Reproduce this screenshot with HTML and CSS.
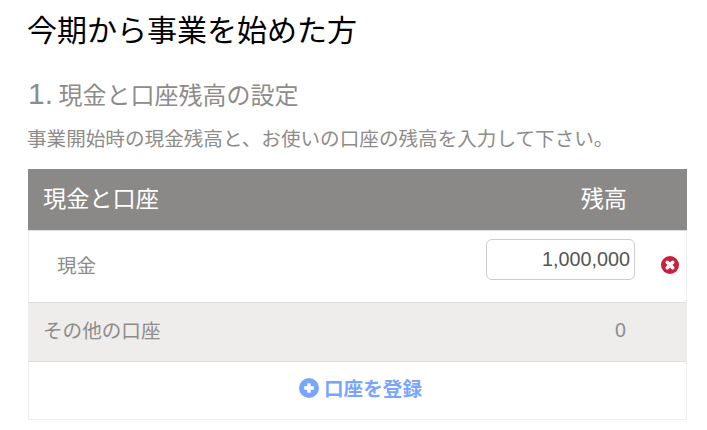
FILE: index.html
```html
<!DOCTYPE html>
<html lang="ja">
  <head>
    <meta charset="UTF-8" />
    <title>今期から事業を始めた方</title>
    <link rel="stylesheet" href="styles.css">
  </head>
  <body>
    <div class="container">
      <h1>今期から事業を始めた方</h1>
      <h2><span class="step">1.</span> 現金と口座残高の設定</h2>
      <p class="lead">事業開始時の現金残高と、お使いの口座の残高を入力して下さい。</p>
      <div class="accounts">
        <div class="row head">
          <div class="name">現金と口座</div>
          <div class="balance">残高</div>
        </div>
        <div class="row cash">
          <div class="name">現金</div>
          <input class="amount" type="text" value="1,000,000" />
          <svg class="remove" viewBox="0 0 18 18" width="18" height="18">
            <circle cx="9" cy="9" r="9" fill="#c9203f" />
            <path d="M6.3 6.3l5.4 5.4M11.7 6.3l-5.4 5.4" stroke="#fff" stroke-width="3.6" stroke-linecap="round" />
          </svg>
        </div>
        <div class="row other">
          <div class="name">その他の口座</div>
          <div class="balance">0</div>
        </div>
        <a href="#" class="add">
          <svg viewBox="0 0 20 20" width="20" height="20">
            <circle cx="10" cy="10" r="10" fill="#7aa5ff" />
            <path d="M10 5.2v9.6M5.2 10h9.6" stroke="#fff" stroke-width="3.4" />
          </svg>
          口座を登録
        </a>
      </div>
    </div>
  </body>
</html>
```

FILE: styles.css
```css
body {
  font-family: "Noto Sans CJK JP", "Liberation Sans", sans-serif;
  background-color: #fff;
  color: #8e8c89;
  margin: 0;
}
.container {
  padding: 0 20px 0 28px;
}
h1 {
  margin: 0 0 0 -1px;
  padding-top: 6px;
  font-size: 30px;
  font-weight: 400;
  line-height: 44px;
  color: #000;
}
h2 {
  margin: 0;
  padding-top: 26px;
  font-size: 24px;
  font-weight: 400;
  line-height: 36px;
}
.step {
  font-family: "Liberation Sans", sans-serif;
  font-size: 30px;
}
.lead {
  margin: 0 0 0 -1px;
  padding-top: 11px;
  font-size: 19.6px;
  line-height: 30px;
  height: 46px;
}
.accounts {
  border: 1px solid #eee;
  border-top: none;
}
.row {
  display: flex;
  align-items: center;
  border-bottom: 1px solid #ddd;
  font-size: 19.6px;
}
.name,
.balance {
  margin-bottom: 6px;
}
.head {
  height: 61px;
  margin: 0 -1px;
  padding: 0 60px 0 15px;
  background-color: #8b8987;
  color: #fff;
  font-size: 23.2px;
}
.balance {
  margin-left: auto;
}
.cash {
  height: 71px;
  padding-left: 28px;
  position: relative;
}
.cash .name {
  margin-bottom: 4px;
}
.amount {
  box-sizing: border-box;
  width: 149px;
  height: 41px;
  margin: 0 51px 14px auto;
  padding: 0 4px;
  border: 1px solid #ccc;
  border-radius: 6px;
  font-family: "Liberation Sans", sans-serif;
  font-size: 19.8px;
  text-align: right;
  color: #555;
}
.remove {
  position: absolute;
  right: 7px;
  top: 25px;
}
.other {
  height: 58px;
  padding: 0 60px 0 14px;
  background-color: #eeedec;
}
.other .balance {
  font-family: "Liberation Sans", sans-serif;
  margin-bottom: 4px;
}
.add {
  display: flex;
  align-items: center;
  justify-content: center;
  gap: 5px;
  height: 51px;
  padding: 0 0 6px 6px;
  color: #7aa5ff;
  font-size: 19.6px;
  font-weight: 700;
  text-decoration: none;
}
```
